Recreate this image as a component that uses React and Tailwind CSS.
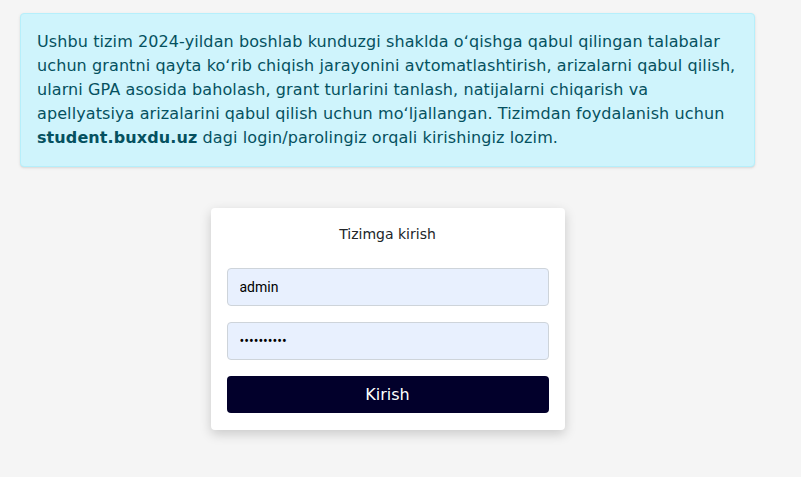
export default function App() {
  return (
    <div className="min-h-[477px] bg-[#f5f5f5] pt-[13px] pl-5" style={{ fontFamily: '"DejaVu Sans", "Open Sans", sans-serif' }}>
      <div className="w-[735px]">
        <div className="rounded-[4px] border border-[#b6effb] bg-[#cff4fc] px-4 py-4 text-[16px] leading-6 tracking-[0.1px] text-[#055160] shadow-sm">
          Ushbu tizim 2024-yildan boshlab kunduzgi shaklda oʻqishga qabul qilingan talabalar
          <br />
          uchun grantni qayta koʻrib chiqish jarayonini avtomatlashtirish, arizalarni qabul qilish,
          <br />
          ularni GPA asosida baholash, grant turlarini tanlash, natijalarni chiqarish va
          <br />
          apellyatsiya arizalarini qabul qilish uchun moʻljallangan. Tizimdan foydalanish uchun
          <br />
          <b className="font-bold">student.buxdu.uz</b> dagi login/parolingiz orqali kirishingiz lozim.
        </div>

        <div className="mt-[41px] flex justify-center">
          <div className="w-[354px] rounded-[4px] bg-white px-4 pt-[16px] pb-[17px] shadow-[0_4px_12px_rgba(0,0,0,0.18)]">
            <div className="text-center text-[14px] leading-5 text-[#212529]">Tizimga kirish</div>
            <form className="mt-[24px] flex flex-col gap-4">
              <input
                type="text"
                defaultValue="admin"
                className="h-[38px] w-full rounded-[4px] border border-[#ced4da] bg-[#e8f0fe] px-3 text-[14px] text-black outline-none"
                style={{ fontFamily: 'Roboto, "Liberation Sans", sans-serif' }}
              />
              <input
                type="password"
                defaultValue="1234567890"
                className="h-[38px] w-full rounded-[4px] border border-[#ced4da] bg-[#e8f0fe] px-3 text-[14px] text-black outline-none"
                style={{ fontFamily: 'Roboto, "Liberation Sans", sans-serif' }}
              />
              <button type="button" className="h-[37px] w-full rounded-[4px] bg-[#02002b] text-[16px] font-medium text-white">
                Kirish
              </button>
            </form>
          </div>
        </div>
      </div>
    </div>
  );
}
